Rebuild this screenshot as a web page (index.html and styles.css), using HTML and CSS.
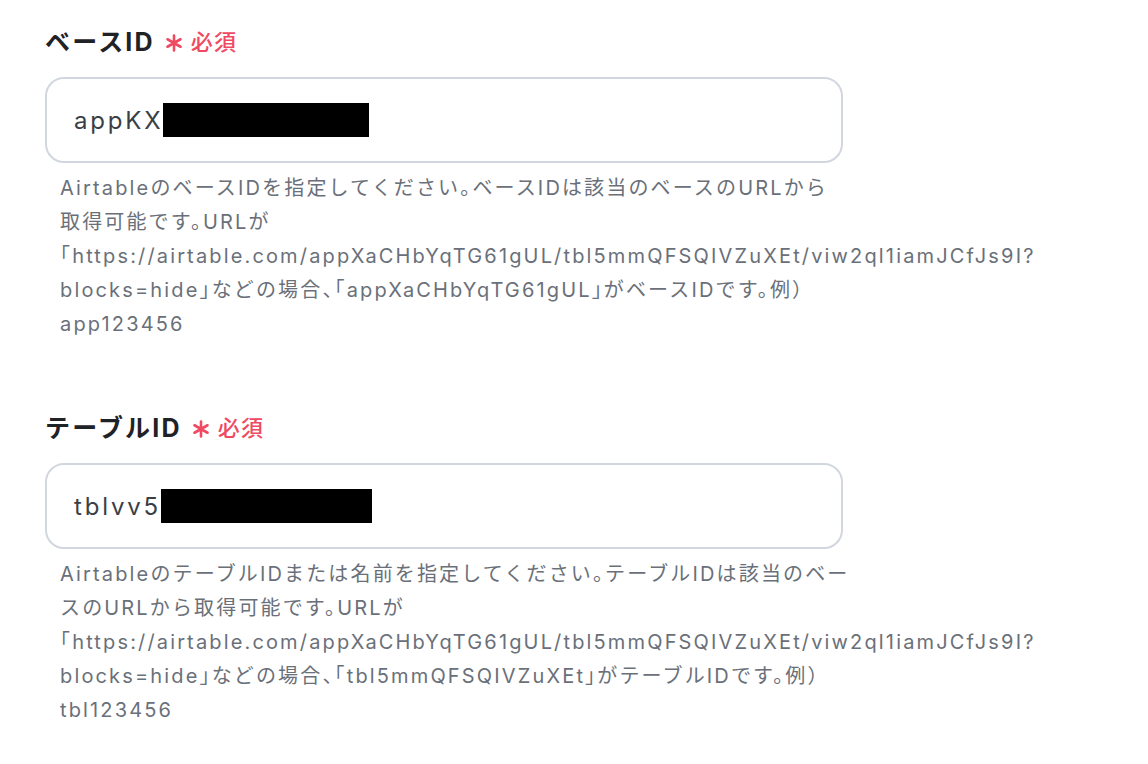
FILE: index.html
```html
<!DOCTYPE html>
<html lang="ja">
<head>
<meta charset="utf-8">
<title>Airtable 設定</title>
<link rel="stylesheet" href="styles.css">
</head>
<body>
<main class="form">
  <section class="field">
    <div class="label-row">
      <span class="label">ベースID</span>
      <svg class="req-mark" viewBox="0 0 18 18" aria-hidden="true"><path d="M9 1.5v15M2.5 5.25l13 7.5M15.5 5.25l-13 7.5"/></svg>
      <span class="req">必須</span>
    </div>
    <div class="input"><span class="value">appKX</span><span class="redact redact-a"></span></div>
    <p class="help">AirtableのベースIDを指定してください。ベースIDは該当のベースのURLから<br>取得可能です。URLが<br>「https://airtable.com/appXaCHbYqTG61gUL/tbl5mmQFSQIVZuXEt/viw2ql1iamJCfJs9I?<br>blocks=hide」などの場合、「appXaCHbYqTG61gUL」がベースIDです。例）<br>app123456</p>
  </section>
  <section class="field">
    <div class="label-row">
      <span class="label">テーブルID</span>
      <svg class="req-mark" viewBox="0 0 18 18" aria-hidden="true"><path d="M9 1.5v15M2.5 5.25l13 7.5M15.5 5.25l-13 7.5"/></svg>
      <span class="req">必須</span>
    </div>
    <div class="input"><span class="value">tblvv5</span><span class="redact redact-b"></span></div>
    <p class="help">AirtableのテーブルIDまたは名前を指定してください。テーブルIDは該当のベー<br>スのURLから取得可能です。URLが<br>「https://airtable.com/appXaCHbYqTG61gUL/tbl5mmQFSQIVZuXEt/viw2ql1iamJCfJs9I?<br>blocks=hide」などの場合、「tbl5mmQFSQIVZuXEt」がテーブルIDです。例）<br>tbl123456</p>
  </section>
</main>
</body>
</html>
```

FILE: styles.css
```css
* { box-sizing: border-box; }

html, body {
  margin: 0;
  padding: 0;
  background: #ffffff;
}

body {
  font-family: Inter, "Noto Sans CJK JP", sans-serif;
  color: #1f2226;
}

.form {
  display: flex;
  flex-direction: column;
  gap: 69px;
  padding: 24px 0 0 45px;
  width: 1100px;
}

.field {
  display: flex;
  flex-direction: column;
}

.label-row {
  display: flex;
  align-items: center;
  height: 32px;
}

.label {
  font-size: 25px;
  font-weight: 700;
  letter-spacing: 2.2px;
  color: #1f2226;
}

.req-mark {
  width: 18px;
  height: 18px;
  margin: 6px 0 0 10px;
  fill: none;
  stroke: #ef4a62;
  stroke-width: 2.6;
  stroke-linecap: round;
}

.req {
  margin-left: 8px;
  font-size: 22px;
  font-weight: 500;
  letter-spacing: 1.2px;
  color: #ef4a62;
}

.input {
  margin-top: 21px;
  width: 798px;
  height: 86px;
  border: 2px solid #d2d6de;
  border-radius: 19px;
  padding: 0 27px;
  display: flex;
  align-items: center;
}

.value {
  font-size: 24px;
  letter-spacing: 2.8px;
  color: #3a3f46;
}

.redact {
  display: inline-block;
  height: 34px;
  background: #000000;
}

.redact-a { width: 206px; }
.redact-b { width: 211px; }

.help {
  margin: 8px 0 0 15px;
  font-size: 20px;
  line-height: 34px;
  letter-spacing: 2.15px;
  color: #6a7079;
  white-space: nowrap;
  font-feature-settings: "halt";
}
```
